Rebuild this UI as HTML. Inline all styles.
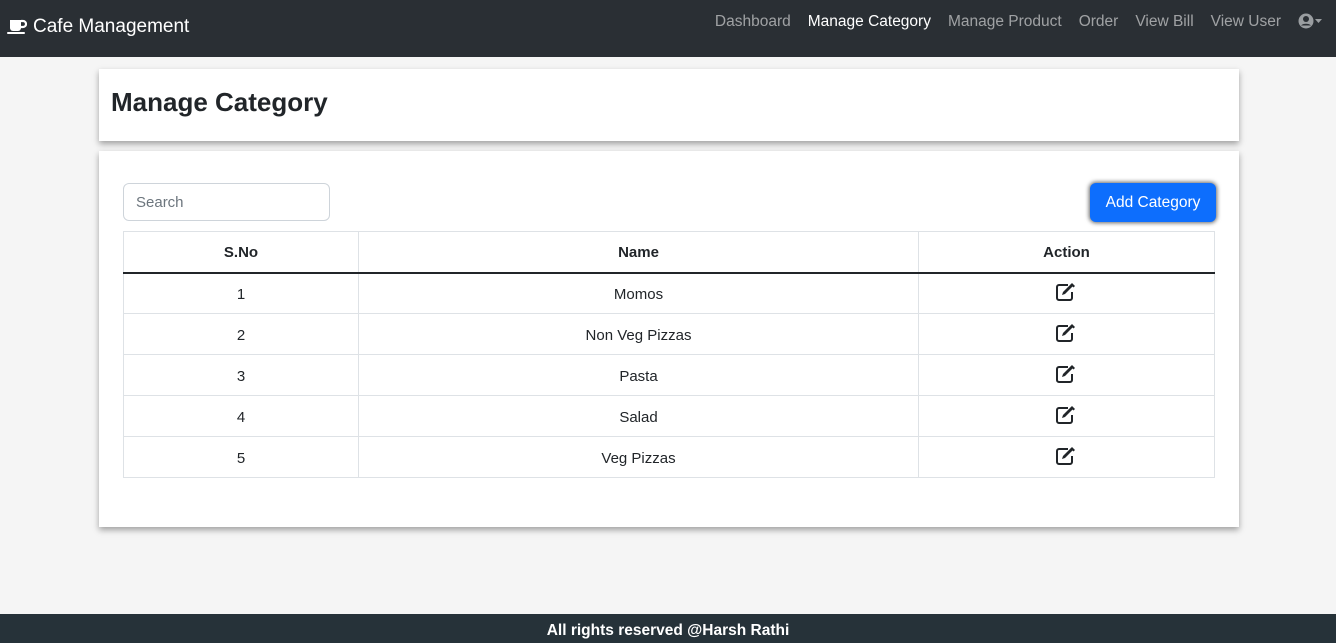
<!DOCTYPE html>
<html><head><style>
*{box-sizing:border-box;margin:0;padding:0}
html,body{width:1336px;height:643px;overflow:hidden}
body{background:#f5f5f5;font-family:"Liberation Sans",sans-serif;color:#212529;position:relative}
.nav{height:57px;background:#2a2f34;position:relative}
.brand{position:absolute;left:7px;top:16px;color:#fff;font-size:19px;display:flex;align-items:center;gap:6px}
.links{position:absolute;right:0;top:13px;display:flex;font-size:15.5px}
.links span{color:rgba(255,255,255,.55);margin-right:17px}
.links span.a{color:#fff}
.card{position:absolute;left:99px;width:1140px;background:#fff;box-shadow:0 3px 6px rgba(0,0,0,.35)}
h1{font-size:26px;position:absolute;left:12px;top:18px;color:#212529;font-weight:600}
.search{position:absolute;left:24px;top:32px;width:207px;height:38px;border:1px solid #ced4da;border-radius:6px;padding:10px 12px;color:#6c757d;font-size:15px}
.btn{position:absolute;left:991px;top:32px;width:126px;height:39px;background:#0d6efd;color:#fff;border-radius:6px;font-size:15.5px;text-align:center;line-height:40px;box-shadow:0 0 4px 1px rgba(0,0,0,.6)}
table{position:absolute;left:24px;top:80px;width:1092px;border-collapse:collapse;font-size:15px}
td,th{border:1px solid #dee2e6;text-align:center;height:41px;padding-top:2px}
th{font-weight:bold;border-bottom:2px solid #212529}
.foot{position:absolute;left:0;bottom:0;width:1336px;height:29px;background:#263239;color:#fff;font-weight:bold;text-align:center;line-height:34px;font-size:15.5px}
</style></head><body>
<div class="nav">
<div class="brand"><svg width="20" height="16" viewBox="0 0 20 16"><path d="M3 1h11v8a3 3 0 0 1-3 3H6a3 3 0 0 1-3-3z" fill="#fff"/><path d="M14 2h2a3 3 0 0 1 0 6h-2" stroke="#fff" stroke-width="2.2" fill="none"/><rect x="0" y="13" width="18" height="2" rx="1" fill="#fff"/></svg>Cafe Management</div>
<div class="links"><span>Dashboard</span><span class="a">Manage Category</span><span>Manage Product</span><span>Order</span><span>View Bill</span><span>View User</span><span style="margin-right:14px"><svg width="24" height="16" viewBox="0 0 24 16"><circle cx="8" cy="8" r="7.5" fill="#9a9ea1"/><circle cx="8" cy="6" r="3" fill="#2a2f34"/><path d="M3 12.5a6 4 0 0 1 10 0" fill="#2a2f34"/><path d="M17 6h7l-3.5 4z" fill="#9a9ea1"/></svg></span></div>
</div>
<div class="card" style="top:69px;height:72px"><h1>Manage Category</h1></div>
<div class="card" style="top:151px;height:376px">
<div class="search">Search</div>
<div class="btn">Add Category</div>
<table>
<tr><th style="width:235px">S.No</th><th style="width:560px">Name</th><th>Action</th></tr>
<tr><td>1</td><td>Momos</td><td>✎</td></tr>
<tr><td>2</td><td>Non Veg Pizzas</td><td>✎</td></tr>
<tr><td>3</td><td>Pasta</td><td>✎</td></tr>
<tr><td>4</td><td>Salad</td><td>✎</td></tr>
<tr><td>5</td><td>Veg Pizzas</td><td>✎</td></tr>
</table>
</div>
<div class="foot">All rights reserved @Harsh Rathi</div>
<script>
document.querySelectorAll('td:nth-child(3)').forEach(t=>t.innerHTML='<svg width="22" height="18" viewBox="0 0 22 18"><path d="M12 2H3a2 2 0 0 0-2 2v11a2 2 0 0 0 2 2h11a2 2 0 0 0 2-2V9" stroke="#212529" stroke-width="2" fill="none"/><path d="M6 12l1-3 8-8 2 2-8 8z" fill="#212529"/><path d="M16 0l3 3-1.5 1.5-3-3z" fill="#212529"/></svg>');
</script>
</body></html>
